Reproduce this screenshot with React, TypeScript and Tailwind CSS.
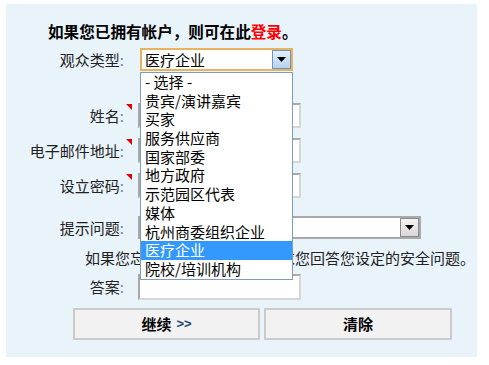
const font = { fontFamily: '"Noto Sans CJK SC", "Noto Sans", sans-serif' };

const options = [
  "- 选择 -",
  "贵宾/演讲嘉宾",
  "买家",
  "服务供应商",
  "国家部委",
  "地方政府",
  "示范园区代表",
  "媒体",
  "杭州商委组织企业",
  "医疗企业",
  "院校/培训机构",
];

function Arrow() {
  return (
    <svg width="9" height="5" viewBox="0 0 9 5">
      <polygon points="0,0 9,0 4.5,5" fill="#000" />
    </svg>
  );
}

function Marker({ on }: { on?: boolean }) {
  return (
    <div className="w-[14px] h-full relative shrink-0">
      {on && (
        <svg className="absolute left-[2px] top-[1px]" width="6" height="6" viewBox="0 0 6 6">
          <polygon points="0,0 6,0 6,6" fill="#e00000" />
        </svg>
      )}
    </div>
  );
}

function Label({ text }: { text: string }) {
  return (
    <div className="w-[118px] text-right text-[15px] leading-[18px] text-[#222] shrink-0">
      {text}
      <span className="text-[#7080b0]">:</span>
    </div>
  );
}

function TextBox({ w = "w-[163px]" }: { w?: string }) {
  return (
    <div
      className={`${w} h-[25px] bg-white border-2 border-t-[#a8a8a8] border-l-[#a8a8a8] border-r-[#d6d6d6] border-b-[#d6d6d6]`}
    />
  );
}

export default function App() {
  return (
    <div className="w-[489px] h-[365px] bg-white pt-[4px] pl-[6px]" style={font}>
      <div className="w-[471px] h-[353px] bg-[#e9f3fa] flex flex-col relative">
        <div className="mt-[18px] ml-[42px] text-[15.6px] leading-[18px] font-bold text-black">
          如果您已拥有帐户，则可在此<span className="text-[#ff0000]">登录</span>。
        </div>

        {/* 观众类型 */}
        <div className="mt-[8px] h-[23px] flex items-center">
          <Label text="观众类型" />
          <Marker />
          <div className="ml-[2px] relative">
            <div className="w-[153px] h-[23px] bg-white border-2 border-[#e6b35e] flex items-center">
              <span className="pl-[3px] flex-1 text-[15px] leading-[18px] text-black">医疗企业</span>
              <div className="w-[19px] h-[19px] border border-[#6f94c4] bg-gradient-to-b from-[#e3effb] to-[#b7d2ef] flex items-center justify-center">
                <Arrow />
              </div>
            </div>
            <div className="absolute left-0 top-[24px] z-10 w-[153px] bg-white border border-[#7f9db9] flex flex-col">
              {options.map((o) => (
                <div
                  key={o}
                  className={`h-[18.7px] pl-[4px] text-[15px] leading-[18.7px] whitespace-nowrap ${
                    o === "医疗企业" ? "bg-[#3399ff] text-white" : "text-black"
                  }`}
                >
                  {o}
                </div>
              ))}
            </div>
          </div>
        </div>

        <div className="mt-[32px] h-[25px] flex items-center">
          <Label text="姓名" />
          <Marker on />
          <TextBox />
        </div>
        <div className="mt-[10px] h-[25px] flex items-center">
          <Label text="电子邮件地址" />
          <Marker on />
          <TextBox />
        </div>
        <div className="mt-[10px] h-[25px] flex items-center">
          <Label text="设立密码" />
          <Marker on />
          <TextBox />
        </div>

        {/* 提示问题 */}
        <div className="mt-[18px] h-[23px] flex items-center">
          <Label text="提示问题" />
          <Marker />
          <div className="w-[283px] h-[23px] bg-white border-2 border-[#a9a9a9] flex items-center justify-end">
            <div className="w-[19px] h-[19px] border border-[#8a8a8a] bg-gradient-to-b from-[#f4f4f4] to-[#d8d8d8] flex items-center justify-center">
              <Arrow />
            </div>
          </div>
        </div>

        <div className="mt-[10px] ml-[79px] text-[15px] leading-[18px] text-[#222] whitespace-nowrap">
          如果您忘记了密码，系统将要求您回答您设定的安全问题。
        </div>

        <div className="mt-[7px] h-[26px] flex items-center">
          <Label text="答案" />
          <Marker />
          <TextBox w="w-[163px] h-[26px]" />
        </div>

        <div className="mt-[8px] ml-[67px] flex gap-[4px]">
          <button className="w-[187px] h-[32px] bg-[#f2f2f2] border-2 border-[#cbcbcb] flex items-center justify-center text-[15px] font-bold text-black">
            继续
            <span className="ml-[5px] text-[13px] text-[#1c3f73] font-bold" style={{ fontFamily: '"Liberation Sans", sans-serif' }}>
              &gt;&gt;
            </span>
          </button>
          <button className="w-[188px] h-[32px] bg-[#f2f2f2] border-2 border-[#cbcbcb] flex items-center justify-center text-[15px] font-bold text-black">
            清除
          </button>
        </div>
      </div>
    </div>
  );
}
